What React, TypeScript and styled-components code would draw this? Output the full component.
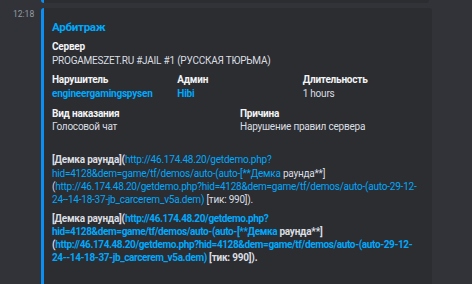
import React from 'react';
import styled, {createGlobalStyle} from 'styled-components';

const Colors = {
    PAGE: '#313338',
    EMBED: '#2b2d31',
    ACCENT: '#0b8ff5',
    LINK: '#00a8fc',
    HEADER: '#f2f3f5',
    TEXT: '#dbdee1',
    MUTED: '#949ba4'
};

const GlobalStyle = createGlobalStyle`
  html, body {
    margin: 0;
    padding: 0;
    background: ${Colors.PAGE};
  }

  body {
    font-family: Roboto, "Noto Sans", "Liberation Sans", sans-serif;
    width: 472px;
    height: 284px;
    overflow: hidden;
  }
`;

const Page = styled.div`
  display: flex;
  flex-direction: column;
  gap: 5px;
`;

const PrevEmbed = styled.div`
  margin-left: 41px;
  width: 388px;
  height: 3px;
  box-sizing: border-box;
  background: ${Colors.EMBED};
  border-left: 3px solid ${Colors.ACCENT};
  border-radius: 0 0 3px 3px;
`;

const Message = styled.div`
  display: flex;
  align-items: flex-start;
`;

const Gutter = styled.div`
  width: 41px;
  flex-shrink: 0;
  box-sizing: border-box;
  padding: 0 0 0 13px;
  font-size: 8.5px;
  line-height: 12px;
  color: ${Colors.MUTED};
`;

const Embed = styled.div`
  width: 391px;
  box-sizing: border-box;
  background: ${Colors.EMBED};
  border-left: 3px solid ${Colors.ACCENT};
  border-radius: 3px 3px 0 0;
  padding: 11px 12px 24px 8px;
  display: flex;
  flex-direction: column;
`;

const Title = styled.div`
  color: ${Colors.LINK};
  font-size: 11.6px;
  font-weight: 700;
  line-height: 16px;
  letter-spacing: -0.3px;
  margin-bottom: 5px;
`;

const Fields = styled.div`
  display: grid;
  grid-template-columns: repeat(6, 1fr);
  column-gap: 8px;
  row-gap: 6.5px;
  letter-spacing: -0.22px;
`;

const Field = styled.div<{ span: number }>`
  grid-column: span ${props => props.span};
  min-width: 0;
`;

const FieldName = styled.div`
  color: ${Colors.HEADER};
  font-size: 10px;
  font-weight: 700;
  line-height: 13.5px;
  min-height: 13.5px;
`;

const FieldValue = styled.div<{ gap?: number }>`
  color: ${Colors.TEXT};
  font-size: 10px;
  line-height: 13.3px;
  white-space: nowrap;
  margin-top: ${props => props.gap || 0}px;
`;

const Mention = styled.span`
  color: ${Colors.LINK};
  font-weight: 700;
`;

const Line = styled.div`
  white-space: nowrap;
`;

const Link = styled.span<{ bold?: boolean }>`
  color: ${Colors.LINK};
  font-weight: ${props => props.bold ? 700 : 400};
  letter-spacing: ${props => props.bold ? '-0.38px' : 'inherit'};
`;

const Plain = styled.span<{ bold?: boolean }>`
  color: ${Colors.TEXT};
  font-weight: ${props => props.bold ? 700 : 400};
`;

const URL = 'http://46.174.48.20/getdemo.php?';

const DemoLink = ({bold}: { bold?: boolean }) => (
    <>
        <Line>
            <Plain bold>[Демка раунда](</Plain>
            <Link bold={bold}>{URL}</Link>
        </Line>
        <Line>
            <Link bold={bold}>hid=4128&amp;dem=game/tf/demos/auto-(auto-[**Демка</Link>
            <Plain bold={bold}> раунда**]</Plain>
        </Line>
        <Line>
            <Plain bold={bold}>(</Plain>
            <Link bold={bold}>{URL}hid=4128&amp;dem=game/tf/demos/auto-(auto-29-12-</Link>
        </Line>
        <Line>
            <Link bold={bold}>24--14-18-37-jb_carcerem_v5a.dem)</Link>
            <Plain bold={bold}> [тик: 990]).</Plain>
        </Line>
    </>
);

const App = () => {

    return (
        <Page>
            <GlobalStyle/>
            <PrevEmbed/>
            <Message>
                <Gutter>12:18</Gutter>
                <Embed>
                    <Title>Арбитраж</Title>
                    <Fields>
                        <Field span={6}>
                            <FieldName>Сервер</FieldName>
                            <FieldValue>PROGAMESZET.RU #JAIL #1 (РУССКАЯ ТЮРЬМА)</FieldValue>
                        </Field>
                        <Field span={2}>
                            <FieldName>Нарушитель</FieldName>
                            <FieldValue><Mention>engineergamingspysen</Mention></FieldValue>
                        </Field>
                        <Field span={2}>
                            <FieldName>Админ</FieldName>
                            <FieldValue><Mention>Hibi</Mention></FieldValue>
                        </Field>
                        <Field span={2}>
                            <FieldName>Длительность</FieldName>
                            <FieldValue>1 hours</FieldValue>
                        </Field>
                        <Field span={3}>
                            <FieldName>Вид наказания</FieldName>
                            <FieldValue>Голосовой чат</FieldValue>
                        </Field>
                        <Field span={3}>
                            <FieldName>Причина</FieldName>
                            <FieldValue>Нарушение правил сервера</FieldValue>
                        </Field>
                        <Field span={6}>
                            <FieldName/>
                            <FieldValue>
                                <DemoLink/>
                            </FieldValue>
                            <FieldValue gap={5}>
                                <DemoLink bold/>
                            </FieldValue>
                        </Field>
                    </Fields>
                </Embed>
            </Message>
        </Page>
    );
};

export default App;
